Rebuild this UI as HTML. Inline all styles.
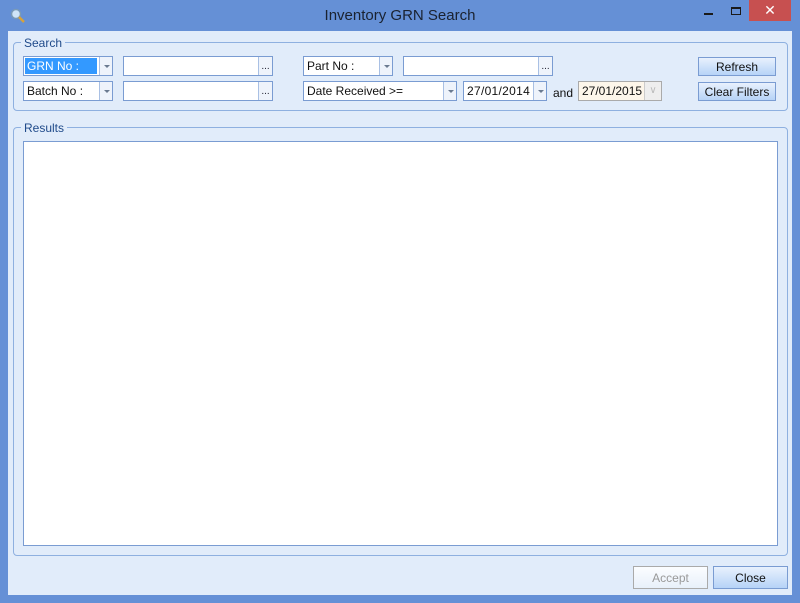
<!DOCTYPE html><html><head><style>
*{box-sizing:border-box}
body{margin:0;width:800px;height:603px;background:#6590d6;font-family:"Liberation Sans",sans-serif;font-size:12px;position:relative;overflow:hidden}
.a{position:absolute}
.client{left:8px;top:31px;width:784px;height:564px;background:#e1ecfa}
.grp{border:1px solid #8eb0e0;border-radius:4px}
.lg{background:#e1ecfa;color:#1f4a8a;padding:0 3px;font-size:12px;line-height:12px}
.box{background:#fff;border:1px solid #7a9cd2}
.dd{border-left:1px solid #a9c0e4;background:#eef3fb;width:13px;height:18px;top:0;right:0}
.dd:after{content:"";position:absolute;left:4px;top:8px;border:3px solid transparent;border-top:3px solid #6a7a90;border-bottom:0}
.el{border-left:1px solid #a9c0e4;background:#eef3fb;width:14px;height:18px;top:0;right:0;font-size:10px;text-align:center;line-height:20px;color:#223}
.t{left:3px;top:2px;font-size:12px;color:#111}
.btn{border:1px solid #7a9cd2;background:linear-gradient(#e8f1fd,#b6d3f7);text-align:center;font-size:12px;color:#111}
</style></head><body>
<div class="a" style="left:10px;top:8px;width:14px;height:14px"><svg width="16" height="16"><circle cx="6" cy="6" r="4.5" fill="#cfe4f7" stroke="#7a9ab8" stroke-width="1.5"/><line x1="9" y1="9" x2="14" y2="14" stroke="#d8a23a" stroke-width="2.5"/></svg></div>
<div class="a" style="left:0;width:800px;top:7px;text-align:center;font-size:15px;color:#1a2230">Inventory GRN Search</div>
<div class="a" style="left:704px;top:13px;width:9px;height:2px;background:#1a1a1a"></div>
<div class="a" style="left:731px;top:7px;width:10px;height:8px;border:1px solid #1a1a1a;border-top-width:2px"></div>
<div class="a" style="left:749px;top:0;width:42px;height:21px;background:#c75050;color:#fff;text-align:center;font-size:14px;line-height:21px">✕</div>
<div class="a client"></div>
<div class="a grp" style="left:13px;top:42px;width:775px;height:69px"></div>
<div class="a lg" style="left:21px;top:37px">Search</div>
<div class="a grp" style="left:13px;top:127px;width:775px;height:429px"></div>
<div class="a lg" style="left:21px;top:122px">Results</div>
<div class="a box" style="left:23px;top:141px;width:755px;height:405px"></div>

<div class="a box" style="left:23px;top:56px;width:90px;height:20px"><div class="a" style="left:1px;top:1px;width:72px;height:16px;background:#3399ff"></div><div class="a t" style="color:#fff">GRN No :</div><div class="a dd"></div></div>
<div class="a box" style="left:23px;top:81px;width:90px;height:20px"><div class="a t">Batch No :</div><div class="a dd"></div></div>
<div class="a box" style="left:123px;top:56px;width:150px;height:20px"><div class="a el">...</div></div>
<div class="a box" style="left:123px;top:81px;width:150px;height:20px"><div class="a el">...</div></div>
<div class="a box" style="left:303px;top:56px;width:90px;height:20px"><div class="a t">Part No :</div><div class="a dd"></div></div>
<div class="a box" style="left:303px;top:81px;width:154px;height:20px"><div class="a t">Date Received &gt;=</div><div class="a dd"></div></div>
<div class="a box" style="left:403px;top:56px;width:150px;height:20px"><div class="a el">...</div></div>
<div class="a box" style="left:463px;top:81px;width:84px;height:20px"><div class="a t" style="letter-spacing:0.3px">27/01/2014</div><div class="a dd"></div></div>
<div class="a" style="left:553px;top:86px;color:#111">and</div>
<div class="a box" style="left:578px;top:81px;width:84px;height:20px;background:#fdf6ea;border-color:#aaa"><div class="a t">27/01/2015</div><div class="a" style="right:0;top:0;width:17px;height:18px;border-left:1px solid #ccc;background:#eee;color:#bbb;font-size:10px;text-align:center;line-height:18px">∨</div></div>
<div class="a btn" style="left:698px;top:57px;width:78px;height:19px;line-height:18px">Refresh</div>
<div class="a btn" style="left:698px;top:82px;width:78px;height:19px;line-height:18px">Clear Filters</div>
<div class="a btn" style="left:633px;top:566px;width:75px;height:23px;line-height:22px;border-color:#aaa;background:linear-gradient(#fbfdff,#e8f0fa);color:#999">Accept</div>
<div class="a btn" style="left:713px;top:566px;width:75px;height:23px;line-height:22px">Close</div>
</body></html>
